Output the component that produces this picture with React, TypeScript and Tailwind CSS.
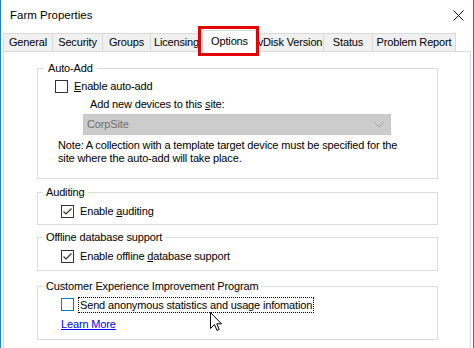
import React from 'react';

const tabs = [
  { label: 'General', w: 'w-[50px]' },
  { label: 'Security', w: 'w-[51px]' },
  { label: 'Groups', w: 'w-[49px]' },
  { label: 'Licensing', w: 'w-[53px]' },
  { label: 'Options', w: 'w-[55px]', active: true },
  { label: 'vDisk Version', w: 'w-[68px]' },
  { label: 'Status', w: 'w-[50px]' },
  { label: 'Problem Report', w: 'w-[84px]' },
];

const CheckBox: React.FC<{ checked?: boolean; hover?: boolean }> = ({ checked, hover }) => (
  <span
    className={`w-[13px] h-[13px] shrink-0 border bg-white flex items-center justify-center ${
      hover ? 'border-[#0078d7]' : 'border-[#333333]'
    }`}
  >
    {checked && (
      <svg width="11" height="11" viewBox="0 0 11 11">
        <polyline points="1.5,5.5 4,8 9.5,2.5" fill="none" stroke="#333333" strokeWidth="1.2" />
      </svg>
    )}
  </span>
);

const Legend: React.FC<{ children: React.ReactNode; ml?: string }> = ({ children, ml = 'ml-[5px] px-[3px]' }) => (
  <legend className={`${ml} leading-[14px]`}>{children}</legend>
);

export default function App() {
  return (
    <div className="relative w-[474px] h-[348px] overflow-hidden bg-white border-x border-[#1883d7] font-['Liberation_Sans',Arial,sans-serif] text-[11px] tracking-[-0.15px] text-black whitespace-nowrap">
      {/* Title bar */}
      <div className="h-[30px] flex items-center justify-between pl-[9px] pr-[9px]">
        <span className="mt-[1px] text-[11.5px] tracking-normal">Farm Properties</span>
        <svg width="11" height="11" viewBox="0 0 11 11" className="mt-[1px]">
          <path d="M0.5 0.5 L10.5 10.5 M10.5 0.5 L0.5 10.5" stroke="#111" strokeWidth="1" />
        </svg>
      </div>

      {/* Tabs */}
      <div className="h-[21px] flex items-end pl-[2px]">
        {tabs.map((t, i) =>
          t.active ? (
            <div
              key={t.label}
              className={`${t.w} relative z-10 -ml-px mb-[-1px] h-[22px] bg-white border border-b-0 border-[#d9d9d9] flex items-center justify-center pb-[1px]`}
            >
              {t.label}
            </div>
          ) : (
            <div
              key={t.label}
              className={`${t.w} ${i > 0 ? '-ml-px' : ''} h-[18px] bg-[#f0f0f0] border border-b-0 border-[#d9d9d9] flex items-center justify-center`}
            >
              {t.label}
            </div>
          )
        )}
      </div>

      {/* Panel */}
      <div className="mx-[2px] h-[300px] border border-[#d9d9d9] pt-[9px] pl-[33px]">
        <fieldset className="w-[401px] border border-[#dcdcdc] pb-[13px]">
          <Legend ml="ml-[6px] px-[4px]">Auto-Add</Legend>
          <div className="mt-[4px] h-[15px] flex items-center pl-[17px] gap-[6px]">
            <CheckBox />
            <span>
              <span className="underline">E</span>nable auto-add
            </span>
          </div>
          <div className="mt-[2px] h-[16px] flex items-center pl-[52px]">
            <span>
              Add new devices to this <span className="underline">s</span>ite:
            </span>
          </div>
          <div className="mt-[2px] ml-[45px] w-[308px] h-[21px] bg-[#cccccc] border border-[#c6c6c6] flex items-center justify-between pl-[3px] pr-[6px] text-[#6d6d6d]">
            <span>CorpSite</span>
            <svg width="10" height="6" viewBox="0 0 10 6">
              <polyline points="0.5,0.5 5,5 9.5,0.5" fill="none" stroke="#a0a0a0" strokeWidth="1" />
            </svg>
          </div>
          <p className="mt-[4px] ml-[20px] leading-[13px]">
            Note: A collection with a template target device must be specified for the
            <br />
            site where the auto-add will take place.
          </p>
        </fieldset>

        <fieldset className="mt-[6px] w-[401px] border border-[#dcdcdc] pb-[5px]">
          <Legend>Auditing</Legend>
          <div className="mt-[5px] h-[15px] flex items-center pl-[23px] gap-[6px]">
            <CheckBox checked />
            <span>
              Enable <span className="underline">a</span>uditing
            </span>
          </div>
        </fieldset>

        <fieldset className="mt-[5px] w-[401px] border border-[#dcdcdc] pb-[6px]">
          <Legend>Offline database support</Legend>
          <div className="mt-[5px] h-[15px] flex items-center pl-[23px] gap-[6px]">
            <CheckBox checked />
            <span>
              Enable offline <span className="underline">d</span>atabase support
            </span>
          </div>
        </fieldset>

        <fieldset className="mt-[8px] w-[401px] border border-[#dcdcdc] pb-[8px]">
          <Legend>Customer Experience Improvement Program</Legend>
          <div className="mt-[4px] h-[15px] flex items-center pl-[23px] gap-[4px]">
            <CheckBox hover />
            <span className="border border-dotted border-black px-[1px] leading-[14px]">
              Send anonymous statistics and usage infomation
            </span>
          </div>
          <div className="mt-[5px] h-[14px] flex items-center pl-[23px]">
            <a href="#" className="text-[#0000ff] underline">
              Learn More
            </a>
          </div>
        </fieldset>
      </div>

      {/* Annotation box around the Options tab */}
      <div className="absolute left-[197px] top-[26px] w-[61px] h-[30px] border-[3px] border-[#e60000] z-20 pointer-events-none" />

      {/* Mouse cursor */}
      <svg
        width="13"
        height="20"
        viewBox="0 0 13 20"
        className="absolute left-[209px] top-[312px] z-20 pointer-events-none"
      >
        <path
          d="M0.5 0.5 L0.5 16.5 L4.5 12.5 L7 18.5 L9.2 17.5 L6.8 11.8 L11.5 11.8 Z"
          fill="#fff"
          stroke="#000"
          strokeWidth="1"
          strokeLinejoin="miter"
        />
      </svg>
    </div>
  );
}
